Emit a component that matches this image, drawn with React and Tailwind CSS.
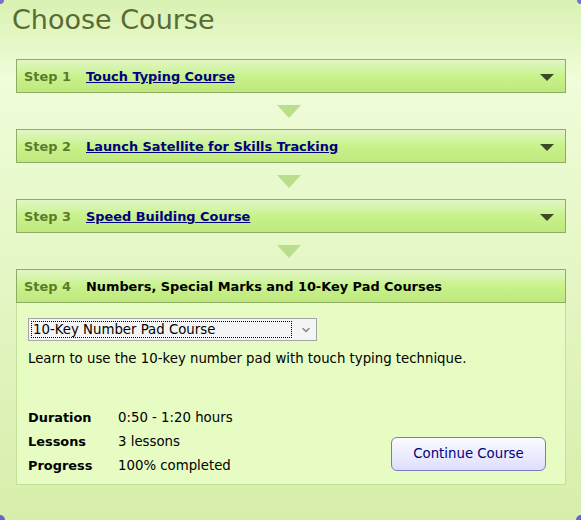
import { ChevronDown } from 'lucide-react'

const steps = [
  { n: 1, title: 'Touch Typing Course' },
  { n: 2, title: 'Launch Satellite for Skills Tracking' },
  { n: 3, title: 'Speed Building Course' },
]

function Caret() {
  return (
    <svg width="16" height="9" viewBox="0 0 16 9" className="shrink-0 ml-[1px]">
      <path d="M1 1h14L8 8z" fill="#3d4a26" />
    </svg>
  )
}

function StepHeader({ n, children, right }) {
  return (
    <div className="h-[34px] flex items-center pt-[2px] pl-[7px] pr-[10px] border border-[#8fad62] bg-gradient-to-b from-[#e2f6c6] via-[#c8f28a] to-[#bfe97f]">
      <span className="w-[62px] font-bold text-[12.9px] text-[#5b7a2e]">Step {n}</span>
      <div className="flex-1">{children}</div>
      {right}
    </div>
  )
}

function Arrow() {
  return (
    <div className="h-[36px] flex items-center justify-center pr-[5px]">
      <svg width="24" height="13" viewBox="0 0 24 13">
        <path d="M0 0h24L12 13z" fill="#bade8c" />
      </svg>
    </div>
  )
}

export default function App() {
  return (
    <div
      className="relative w-[581px] h-[520px] overflow-hidden bg-gradient-to-b from-[#d9f1b2] via-[#effdd9] via-[15%] to-[#d7eeab] text-[13.3px] text-black"
      style={{ fontFamily: '"DejaVu Sans", Verdana, sans-serif' }}
    >
      <h1 className="pl-[12px] pt-[3px] text-[27px] leading-[34px] text-[#5a6b30]">Choose Course</h1>

      <div className="ml-[16px] mt-[22px] w-[550px]">
        {steps.map((s) => (
          <div key={s.n}>
            <StepHeader n={s.n} right={<Caret />}>
              <a href="#" className="font-bold text-[12.9px] text-[#000080] underline">{s.title}</a>
            </StepHeader>
            <Arrow />
          </div>
        ))}

        <div>
          <StepHeader n={4}>
            <span className="font-bold text-[12.9px]">Numbers, Special Marks and 10-Key Pad Courses</span>
          </StepHeader>
          <div className="h-[182px] border border-t-0 border-[#c3df98] bg-[#e6fcc2] px-[11px] pt-[15px]">
            <div className="w-[289px] h-[23px] flex items-center border border-[#a5a5a5] bg-[#f4f4f4] pl-[2px] pr-[4px]">
              <span className="flex-1 border border-dotted border-black leading-[15px] px-[1px]">10-Key Number Pad Course</span>
              <ChevronDown size={12} strokeWidth={3} className="ml-[8px] text-[#888]" />
            </div>
            <p className="mt-[10px] leading-[16px]">Learn to use the 10-key number pad with touch typing technique.</p>

            <div className="mt-[43px] flex items-end justify-between pr-[8px]">
              <div className="grid grid-cols-[90px_auto] gap-y-[8px] leading-[16px]">
                <span className="font-bold text-[12.9px]">Duration</span>
                <span>0:50 - 1:20 hours</span>
                <span className="font-bold text-[12.9px]">Lessons</span>
                <span>3 lessons</span>
                <span className="font-bold text-[12.9px]">Progress</span>
                <span>100% completed</span>
              </div>
              <button className="mb-[3px] w-[155px] h-[34px] rounded-[6px] border border-[#7b7bbb] bg-gradient-to-b from-[#fbfbff] to-[#dedefd] text-[#000080]">
                Continue Course
              </button>
            </div>
          </div>
        </div>
      </div>

      <div className="absolute left-0 top-0 w-[4px] h-[4px] rounded-br-full bg-[#7b6fd6]" />
      <div className="absolute right-0 top-0 w-[4px] h-[4px] rounded-bl-full bg-[#7b6fd6]" />
      <div className="absolute left-0 bottom-0 w-[5px] h-[5px] rounded-tr-full bg-[#6d5fd4]" />
      <div className="absolute right-0 bottom-0 w-[5px] h-[5px] rounded-tl-full bg-[#6d5fd4]" />
    </div>
  )
}
